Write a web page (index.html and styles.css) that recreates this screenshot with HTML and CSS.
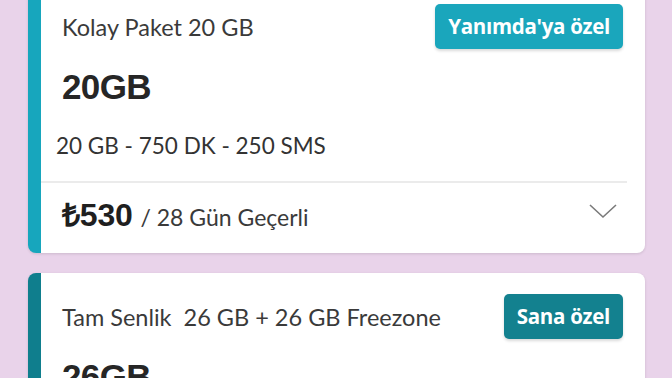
FILE: index.html
```html
<!DOCTYPE html>
<html lang="tr">
<head>
<meta charset="utf-8">
<link rel="stylesheet" href="styles.css">
</head>
<body>
<main class="list">
  <section class="card card-light">
    <div class="card-head">
      <h2 class="title">Kolay Paket 20 GB</h2>
      <span class="badge badge-light">Yanımda'ya özel</span>
    </div>
    <div class="amount">20GB</div>
    <div class="details">20 GB - 750 DK - 250 SMS</div>
    <div class="card-foot">
      <div class="price"><strong>₺530</strong> / 28 Gün Geçerli</div>
      <svg class="chev" width="28" height="15" viewBox="0 0 28 15"><path d="M1 1 L14 13 L27 1" fill="none" stroke="#7a7a7a" stroke-width="1.6"/></svg>
    </div>
  </section>
  <section class="card card-dark">
    <div class="card-head">
      <h2 class="title">Tam Senlik&nbsp; 26 GB + 26 GB Freezone</h2>
      <span class="badge badge-dark">Sana özel</span>
    </div>
    <div class="amount">26GB</div>
    <div class="details">26 GB - 1000 DK - 1000 SMS</div>
    <div class="card-foot">
      <div class="price"><strong>₺650</strong> / 28 Gün Geçerli</div>
      <svg class="chev" width="28" height="15" viewBox="0 0 28 15"><path d="M1 1 L14 13 L27 1" fill="none" stroke="#7a7a7a" stroke-width="1.6"/></svg>
    </div>
  </section>
</main>
</body>
</html>
```

FILE: styles.css
```css
html, body {
  margin: 0;
  padding: 0;
  background: #e9d3ea;
  overflow: hidden;
}
body {
  font-family: Lato, "Liberation Sans", sans-serif;
  color: #333;
}
.list {
  display: flex;
  flex-direction: column;
  gap: 20px;
  margin-top: -17px;
  padding: 0 27px 0 28px;
}
.card {
  background: #fff;
  border-radius: 8px;
  border-left: 13px solid #17a6bd;
  box-shadow: 0 1px 3px rgba(0,0,0,0.12);
  padding: 0 22px 0 21px;
}
.card-dark { border-left-color: #0f7e8d; }
.card-head {
  display: flex;
  justify-content: space-between;
  align-items: center;
  padding-top: 21px;
}
.title {
  margin: 0;
  font-weight: 400;
  font-size: 23.5px;
  color: #3a3a3a;
}
.badge {
  font-family: "Open Sans", Lato, sans-serif;
  color: #fff;
  font-weight: 700;
  font-size: 20.5px;
  letter-spacing: -0.3px;
  height: 45px;
  line-height: 45px;
  padding: 0 13px;
  border-radius: 5px;
  box-shadow: 0 2px 3px rgba(0,0,0,0.15);
}
.badge-light { background: #1aa6bc; }
.badge-dark { background: #13818f; }
.amount {
  font-family: "Liberation Sans", sans-serif;
  font-weight: 700;
  font-size: 35px;
  letter-spacing: -0.6px;
  color: #262626;
  margin-top: 18px;
  line-height: 40px;
}
.details {
  font-size: 22.5px;
  margin: 24px 0 0 -6px;
  line-height: 30px;
  color: #333;
  padding-bottom: 20px;
}
.card-foot {
  border-top: 2px solid #ebebeb;
  margin: 0 -4px 0 -21px;
  padding: 14px 10px 18px 21px;
  display: flex;
  justify-content: space-between;
  align-items: center;
}
.price {
  font-size: 23px;
  line-height: 36px;
  color: #3a3a3a;
}
.price strong {
  font-family: "Liberation Sans", sans-serif;
  font-size: 32px;
  font-weight: 700;
  color: #1f1f1f;
  letter-spacing: -0.2px;
  margin-right: 2px;
}
.chev { display: block; margin-top: -10px; }
```
